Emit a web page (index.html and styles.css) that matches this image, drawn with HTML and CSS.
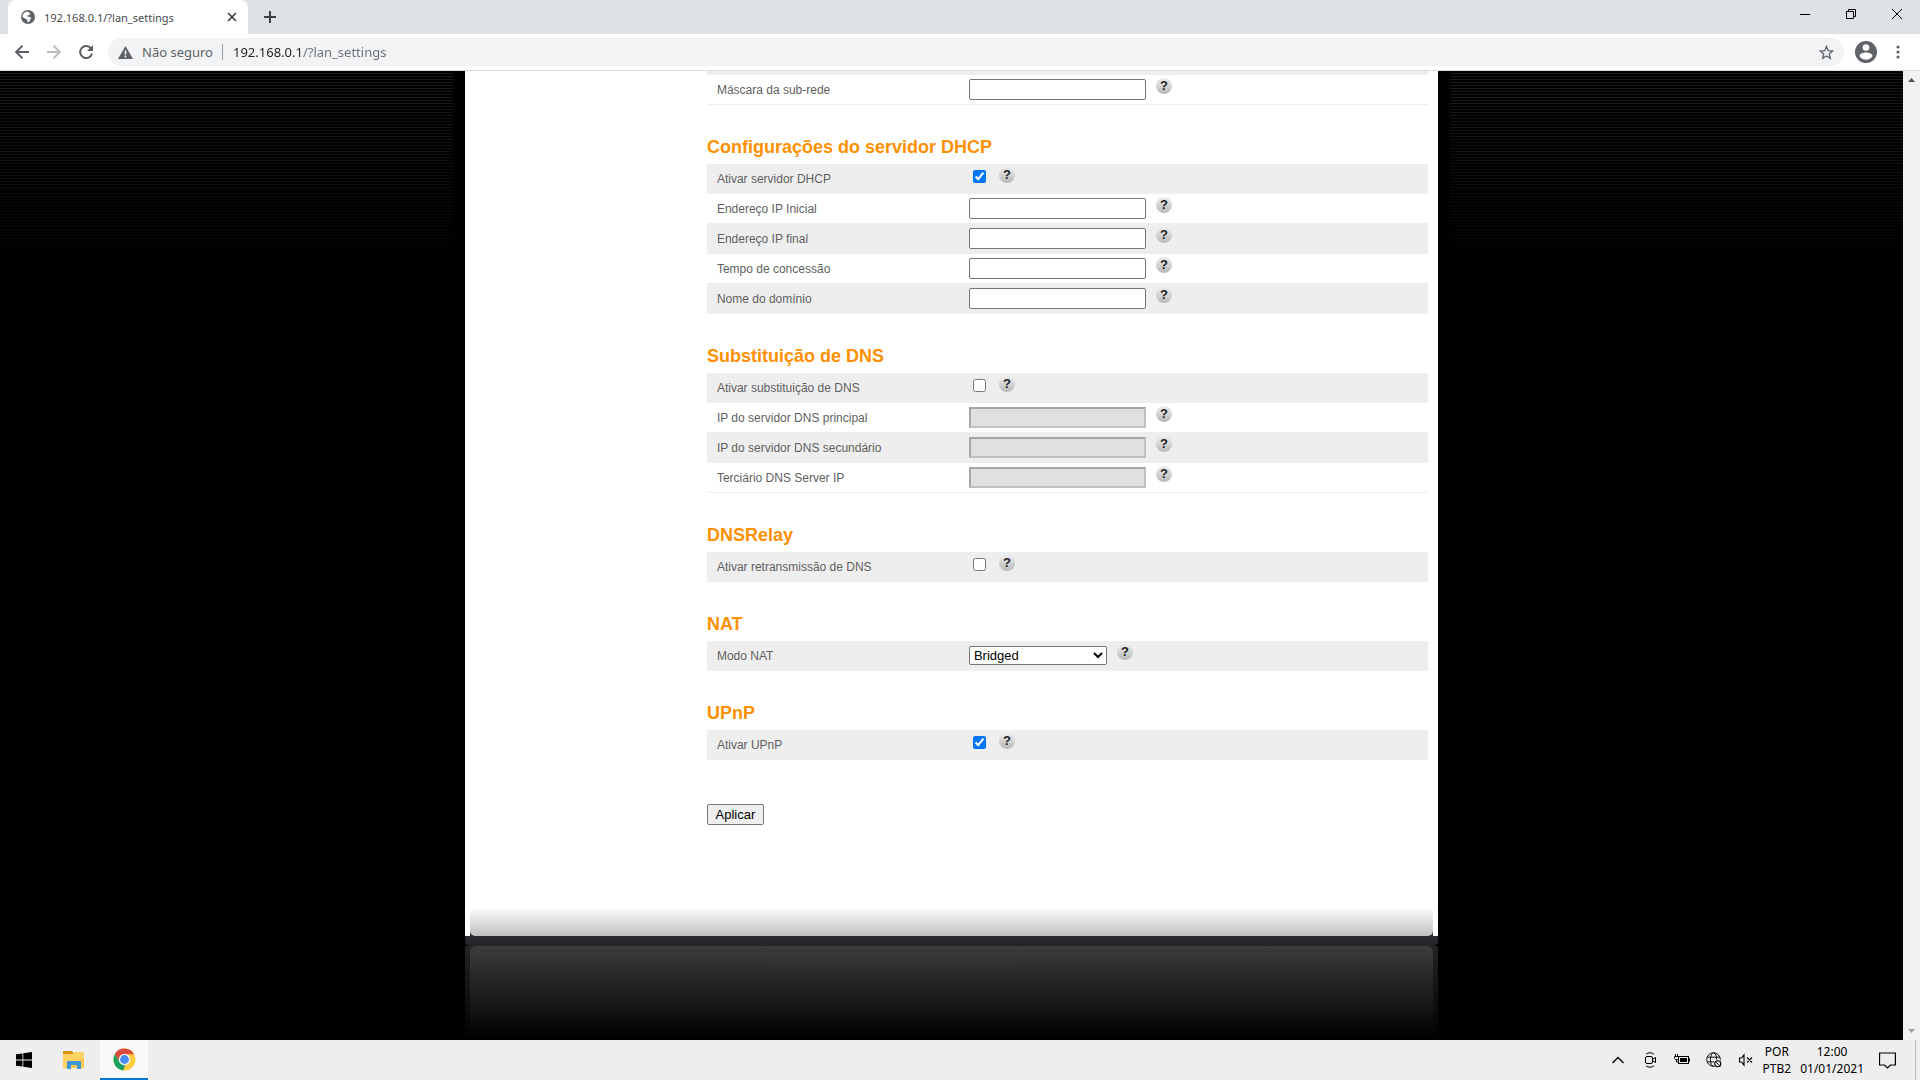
FILE: index.html
```html
<!DOCTYPE html>
<html lang="pt-BR">
<head>
<meta charset="utf-8">
<title>192.168.0.1/?lan_settings</title>
<link rel="stylesheet" href="styles.css">
</head>
<body>
<header class="browser">
  <div class="tabstrip">
    <div class="tab">
      <svg class="tab-icon" viewBox="0 0 16 16"><circle cx="8" cy="8" r="7" fill="#5f6368"/><path d="M7 2.500c1 1 3 .5 3 2S8.500 6 7.500 6.500 8 8 9.500 8s2 1.500 1 2.500-1 2.500-2.500 3c-.8-.8-.3-2-1-2.800S4 9.500 2.300 7.800C2.500 5 4.500 3 7 2.500z" fill="#fff"/></svg>
      <span class="tab-title">192.168.0.1/?lan_settings</span>
      <button class="icon-button" aria-label="Fechar guia"><svg width="10" height="10" viewBox="0 0 10 10"><path d="M1 1l8 8M9 1l-8 8" stroke="#3c4043" stroke-width="1.700"/></svg></button>
    </div>
    <button class="icon-button new-tab" aria-label="Nova guia"><svg width="12" height="12" viewBox="0 0 12 12"><path d="M6 0v12M0 6h12" stroke="#3c4043" stroke-width="2"/></svg></button>
    <div class="window-controls">
      <button class="icon-button window-button" aria-label="Minimizar"><svg width="10" height="10" viewBox="0 0 10 10"><path d="M0 5.500h10" stroke="#000"/></svg></button>
      <button class="icon-button window-button" aria-label="Restaurar"><svg width="10" height="10" viewBox="0 0 10 10"><path d="M.5 2.500h7v7h-7zM2.500 2V.5h7v7H8" fill="none" stroke="#000"/></svg></button>
      <button class="icon-button window-button" aria-label="Fechar"><svg width="10" height="10" viewBox="0 0 10 10"><path d="M0 0l10 10M10 0L0 10" stroke="#000"/></svg></button>
    </div>
  </div>
  <div class="toolbar">
    <button class="icon-button nav-button" aria-label="Voltar"><svg width="14" height="14" viewBox="0 0 14 14"><path d="M14 7H1.500M7.500.7L1.200 7l6.300 6.300" fill="none" stroke="#5a5e62" stroke-width="1.900"/></svg></button>
    <button class="icon-button nav-button" aria-label="Avançar"><svg width="14" height="14" viewBox="0 0 14 14"><path d="M0 7h12.500M6.500.7L12.800 7l-6.300 6.300" fill="none" stroke="#babcbe" stroke-width="1.900"/></svg></button>
    <button class="icon-button nav-button" aria-label="Recarregar"><svg width="14" height="14" viewBox="0 0 14 14"><path d="M12 3.500A6 6 0 1 0 13 8.600" fill="none" stroke="#5a5e62" stroke-width="2"/><path d="M14 0v6H8z" fill="#5a5e62"/></svg></button>
    <div class="omnibox">
      <svg class="warning" width="15" height="13" viewBox="0 0 15 13"><path d="M7.500 0L15 13H0z" fill="#5f6368"/><path d="M7.500 4.500v4M7.500 9.500v2" stroke="#fff" stroke-width="1.500"/></svg>
      <label class="security" for="address">Não seguro</label>
      <input class="address" type="text" id="address" value="192.168.0.1/?lan_settings">
      <button class="icon-button star" aria-label="Favoritos"><svg width="15" height="15" viewBox="0 0 15 15"><path d="M7.500 1.500l1.700 4.200 4.500.3-3.500 2.900 1.200 4.500-3.900-2.500-3.900 2.500 1.200-4.500L1.300 6l4.500-.3z" fill="none" stroke="#5f6368" stroke-width="1.300"/></svg></button>
    </div>
    <button class="icon-button profile" aria-label="Perfil"><svg width="22" height="22" viewBox="0 0 22 22"><circle cx="11" cy="11" r="11" fill="#5f6368"/><circle cx="11" cy="6.500" r="3.300" fill="#fff"/><path d="M4.500 15.200c0-2.400 3.500-3.600 6.500-3.600s6.500 1.200 6.500 3.600c-1.500 2.200-3.900 3.500-6.500 3.500s-5-1.300-6.500-3.500z" fill="#fff"/></svg></button>
    <button class="icon-button menu" aria-label="Menu"><svg width="4" height="14" viewBox="0 0 4 14" fill="#5f6368"><circle cx="2" cy="2" r="1.600"/><circle cx="2" cy="7" r="1.600"/><circle cx="2" cy="12" r="1.600"/></svg></button>
  </div>
</header>

<div class="viewport">
  <main class="page">
    <div class="frame">
      <form class="panel">
        <div class="settings">
          <div class="row spacer"></div>
          <div class="row"><label for="mask">Máscara da sub-rede</label><input class="text" type="text" id="mask"><a class="help" href="#">?</a></div>

          <h2>Configurações do servidor DHCP</h2>
          <div class="row shaded"><label for="dhcp">Ativar servidor DHCP</label><input class="check" type="checkbox" id="dhcp" checked><a class="help" href="#">?</a></div>
          <div class="row"><label for="ip-start">Endereço IP Inicial</label><input class="text" type="text" id="ip-start"><a class="help" href="#">?</a></div>
          <div class="row shaded"><label for="ip-end">Endereço IP final</label><input class="text" type="text" id="ip-end"><a class="help" href="#">?</a></div>
          <div class="row"><label for="lease">Tempo de concessão</label><input class="text" type="text" id="lease"><a class="help" href="#">?</a></div>
          <div class="row shaded"><label for="domain">Nome do domínio</label><input class="text" type="text" id="domain"><a class="help" href="#">?</a></div>

          <h2>Substituição de DNS</h2>
          <div class="row shaded"><label for="dns">Ativar substituição de DNS</label><input class="check" type="checkbox" id="dns"><a class="help" href="#">?</a></div>
          <div class="row"><label for="dns1">IP do servidor DNS principal</label><input class="text" type="text" id="dns1" disabled><a class="help" href="#">?</a></div>
          <div class="row shaded"><label for="dns2">IP do servidor DNS secundário</label><input class="text" type="text" id="dns2" disabled><a class="help" href="#">?</a></div>
          <div class="row"><label for="dns3">Terciário DNS Server IP</label><input class="text" type="text" id="dns3" disabled><a class="help" href="#">?</a></div>

          <h2>DNSRelay</h2>
          <div class="row shaded"><label for="relay">Ativar retransmissão de DNS</label><input class="check" type="checkbox" id="relay"><a class="help" href="#">?</a></div>

          <h2>NAT</h2>
          <div class="row shaded"><label for="nat">Modo NAT</label><select class="mode" id="nat"><option>Bridged</option></select><a class="help" href="#">?</a></div>

          <h2>UPnP</h2>
          <div class="row shaded"><label for="upnp">Ativar UPnP</label><input class="check" type="checkbox" id="upnp" checked><a class="help" href="#">?</a></div>

          <button class="apply" type="button">Aplicar</button>
        </div>
        <div class="panel-foot"><div class="shine"></div></div>
      </form>
      <div class="ledge"></div>
      <div class="reflection"><div class="glow"></div></div>
    </div>
  </main>
  <div class="scrollbar">
    <svg width="7" height="4" viewBox="0 0 7 4"><path d="M3.500 0L7 4H0z" fill="#505050"/></svg>
    <svg width="7" height="4" viewBox="0 0 7 4"><path d="M0 0h7L3.500 4z" fill="#a3a3a3"/></svg>
  </div>
</div>

<footer class="taskbar">
  <button class="icon-button start" aria-label="Iniciar"><svg width="16" height="16" viewBox="0 0 16 16"><path d="M0 2.300L6.500 1.400v6.100H0zM7.300 1.300L16 0v7.500H7.300zM0 8.400h6.500v6.200L0 13.700zM7.300 8.400H16V16l-8.700-1.300z"/></svg></button>
  <button class="icon-button task" aria-label="Explorador"><svg width="22" height="18" viewBox="0 0 22 18"><path d="M0 0h9l1 1v3H0z" fill="#d9960a"/><path d="M0 3h10l1-2h10v16H0z" fill="#ffd263"/><path d="M0 17L21 7v10z" fill="#fbc94e"/><path d="M4 18v-8h14v8h-4v-4H8v4z" fill="#3d96d8"/></svg></button>
  <button class="icon-button task active" aria-label="Chrome"><svg width="23" height="23" viewBox="0 0 24 24"><circle cx="12" cy="12" r="11.500" fill="#ffcd40"/><path d="M2 6.300A11.500 11.500 0 0 1 22 6.500H12a5.500 5.500 0 0 0-5.200 7.300z" fill="#db4a3f"/><path d="M2 6.300l4.800 8.400A5.500 5.500 0 0 0 13 17.400l-2.500 6A11.500 11.500 0 0 1 2 6.300z" fill="#1aa15f"/><circle cx="12" cy="12" r="6" fill="#f1f1f1"/><circle cx="12" cy="12" r="4.600" fill="#4a8af4"/></svg></button>
  <div class="tray">
    <div class="tray-icons">
      <svg width="16" height="16" viewBox="0 0 16 16"><path d="M2.500 11L8 5.500l5.500 5.500" fill="none" stroke="#000" stroke-width="1.300"/></svg>
      <svg width="16" height="16" viewBox="-2 0 16 16"><rect x="1.500" y="4.500" width="7" height="7" rx="1.500" fill="none" stroke="#000"/><path d="M9 7l2.500-1.500v5L9 9M2 2.200C4 .3 8 .3 10 2.200M2 13.800c2 1.900 6 1.900 8 0" fill="none" stroke="#000"/></svg>
      <svg width="16" height="16" viewBox="0 0 16 16"><rect x="4.500" y="4.500" width="10" height="7" fill="#eee" stroke="#000"/><path d="M6 6h7v4H6zM14.500 6.500H16v3h-1.500z"/><path d="M.5 4.500h4v2l-1 1h-2l-1-1zM1.500 2v2M3.500 2v2M2.500 7.500V10H5" fill="#eee" stroke="#000"/></svg>
      <svg width="16" height="16" viewBox="0 0 17 17"><g fill="none" stroke="#000"><circle cx="8" cy="8" r="7.200"/><ellipse cx="8" cy="8" rx="3.300" ry="7.200"/><path d="M1.500 5.500h13M1.500 10.500h13"/></g><circle cx="12.500" cy="12.500" r="4.500" fill="#eee"/><circle cx="12.500" cy="12.500" r="3.200" fill="none" stroke="#000" stroke-width="1.200"/><path d="M10.500 10.500l4 4" stroke="#000"/></svg>
      <svg width="16" height="16" viewBox="0 -2 16 16"><path d="M1.500 4h2L6 .8v10.400L3.500 8h-2zM9 3.500l5 5M14 3.500l-5 5" fill="none" stroke="#000" stroke-width="1.100"/></svg>
    </div>
    <div class="tray-text"><span>POR</span><span>PTB2</span></div>
    <div class="tray-text"><span>12:00</span><span>01/01/2021</span></div>
    <svg class="notice" width="17" height="17" viewBox="0 0 17 17"><path d="M.6 1h15.800v12h-5L8.500 16l-3-3h-5z" fill="none" stroke="#000" stroke-width="1.200"/></svg>
  </div>
  <div class="show-desktop"></div>
</footer>
</body>
</html>
```
FILE: styles.css
```css
* { box-sizing: border-box; }
html, body { height: 100%; }
body {
  margin: 0;
  display: flex;
  flex-direction: column;
  overflow: hidden;
  background: #000;
  font-family: "Liberation Sans", Arial, sans-serif;
  font-size: 12px;
}
svg { display: block; flex: none; }
.icon-button {
  display: flex;
  align-items: center;
  justify-content: center;
  padding: 0;
  border: 0;
  background: none;
}

/* Browser chrome */
.browser { flex: none; font-family: "Noto Sans", "Open Sans", sans-serif; }
.tabstrip {
  display: flex;
  align-items: stretch;
  height: 34px;
  padding-left: 8px;
  background: #dee1e6;
}
.tab {
  display: flex;
  align-items: center;
  width: 240px;
  padding: 0 11px 0 12px;
  border-radius: 8px 8px 0 0;
  background: #fff;
}
.tab-icon { width: 16px; height: 16px; }
.tab-title { flex: 1; margin-left: 8px; font-size: 11px; color: #45494d; }
.new-tab { width: 44px; }
.window-controls { display: flex; margin-left: auto; height: 28px; }
.window-button { width: 46px; }
.toolbar {
  display: flex;
  align-items: center;
  height: 37px;
  padding: 0 14px 0 6px;
  border-bottom: 1px solid #dadce0;
  background: #fff;
}
.nav-button { width: 32px; height: 32px; }
.omnibox {
  flex: 1;
  display: flex;
  align-items: center;
  height: 28px;
  margin-left: 6px;
  padding: 0 10px;
  border-radius: 14px;
  background: #f1f3f4;
  font-size: 13px;
}
.security {
  margin-left: 9px;
  padding-right: 9px;
  line-height: 16px;
  border-right: 1px solid #9aa0a6;
  color: #5f6368;
}
.address {
  flex: 1;
  min-width: 0;
  margin: 0 0 0 10px;
  padding: 0;
  border: 0;
  outline: 0;
  background: linear-gradient(to right, #202124 69px, #6b6f74 69px);
  background-clip: text;
  -webkit-background-clip: text;
  color: transparent;
  font: inherit;
}
.profile { margin-left: 11px; }
.menu { width: 16px; margin-left: 13px; }

/* Router page */
.viewport { flex: 1; display: flex; min-height: 0; }
.page {
  flex: 1;
  display: flex;
  justify-content: center;
  min-width: 0;
  overflow: hidden;
  background:
    linear-gradient(to bottom, transparent, #000 200px),
    repeating-linear-gradient(to bottom, #000 0 2px, #1a1a1a 2px 3px);
}
.frame {
  display: flex;
  flex-direction: column;
  width: 52.400%;
  padding: 0 12px;
  background: #000;
}
.panel { display: flex; flex-direction: column; background: #fff; }
.settings { padding: 0 10px 84px 242px; }
.row {
  display: flex;
  align-items: flex-start;
  height: 30px;
  padding-left: 10px;
  border-bottom: 1px solid #eee;
  line-height: 30px;
  color: #5f5f5f;
}
.row label { width: 252px; }
.shaded { background: #eee; }
.spacer { height: 4px; background: #eee; }
h2 {
  margin: 0;
  padding: 32px 0 7px;
  font-size: 18px;
  line-height: 20px;
  color: #ff9000;
}
.text {
  width: 177px;
  height: 21px;
  margin: 4px 0 0;
  padding: 1px 2px;
  border: 1px solid #767676;
  border-radius: 2px;
  background: #fff;
}
.text:disabled {
  border: 2px solid;
  border-color: #a6a6a6 #c0c0c0 #c0c0c0 #a6a6a6;
  border-radius: 0;
  background: #e0e0e0;
}
.check { width: 13px; height: 13px; margin: 6px 3px 0 4px; }
.mode {
  width: 138px;
  height: 19px;
  margin: 5px 0 0;
  border: 1px solid #767676;
  border-radius: 2px;
  background: #fff;
  font: 13px "Liberation Sans", Arial, sans-serif;
}
.help {
  width: 16px;
  height: 16px;
  margin: 3px 0 0 10px;
  border-radius: 50%;
  background: linear-gradient(#eee, #b8b8b8);
  font-size: 13px;
  font-weight: bold;
  line-height: 16px;
  text-align: center;
  text-decoration: none;
  color: #222;
}
.apply {
  display: block;
  width: 57px;
  height: 21px;
  margin-top: 44px;
  padding: 0;
  border: 1px solid #767676;
  border-radius: 2px;
  background: #efefef;
  font: 13px "Liberation Sans", Arial, sans-serif;
  color: #000;
}
.panel-foot { margin: 0 5px; background: linear-gradient(#fff 50%, #292b31 50%); }
.shine {
  height: 27px;
  border-radius: 0 0 5px 5px;
  background: linear-gradient(#fafafa, #c0c0c2);
}
.ledge {
  flex: none;
  height: 10px;
  border-radius: 0 0 5px 5px;
  background: linear-gradient(#292b31, #242527);
}
.reflection {
  flex: 1;
  display: flex;
  padding: 0 5px;
  background: linear-gradient(#242424, #000);
}
.glow {
  flex: 1;
  border-radius: 6px 6px 0 0;
  background: linear-gradient(#3c3c3c, #000);
}
.scrollbar {
  display: flex;
  flex-direction: column;
  align-items: center;
  justify-content: space-between;
  width: 17px;
  padding: 7px 0;
  background: #f1f1f1;
}

/* Taskbar */
.taskbar {
  flex: none;
  display: flex;
  height: 40px;
  background: #eee;
  font-family: "Noto Sans", "Open Sans", sans-serif;
}
.start { width: 48px; }
.task { width: 52px; }
.active { width: 48px; border-bottom: 2px solid #0078d7; background: #f8f8f8; }
.tray { display: flex; align-items: center; gap: 9px; margin-left: auto; }
.tray-icons { display: flex; gap: 16px; }
.tray-text {
  display: flex;
  flex-direction: column;
  align-items: center;
  line-height: 17px;
}
.notice { margin: 0 19px 0 6px; }
.show-desktop { width: 5px; border-left: 1px solid #bbb; }
```
